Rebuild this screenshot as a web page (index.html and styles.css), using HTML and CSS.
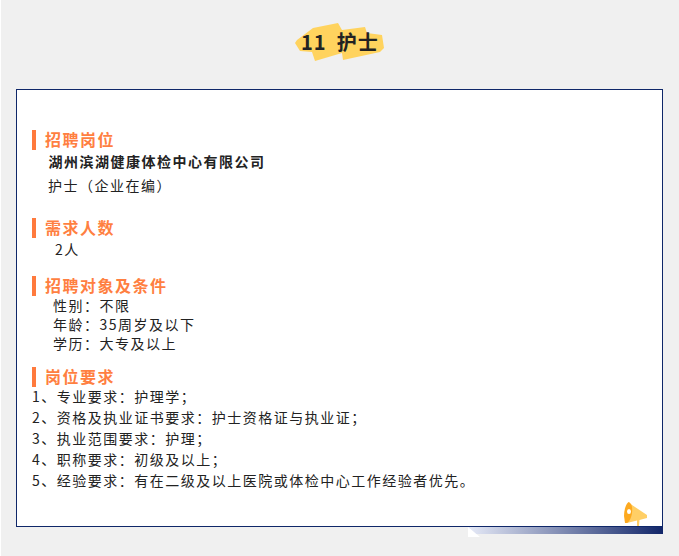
FILE: index.html
```html
<!DOCTYPE html>
<html lang="zh-CN">
<head>
<meta charset="utf-8">
<title>护士</title>
<link rel="stylesheet" href="styles.css">
</head>
<body>
<div class="page">
  <header class="title-wrap">
    <div class="title">
      <svg class="brush" viewBox="0 0 90 40" aria-hidden="true">
        <path d="M0 21 L2 18 L18 6 L43 1 L47 8 L70 5 L72 11 L87 13 L89 26 L85 30 L48 38 L47 31 L20 39 L17 30 L5 29 Z" fill="#ffd35e"/>
      </svg>
      <h1 class="title-text">11 护士</h1>
    </div>
  </header>
  <main class="card">
    <section class="sec sec-first">
      <h2 class="head">招聘岗位</h2>
      <p class="line strong ind-a">湖州滨湖健康体检中心有限公司</p>
      <p class="line tall ind-b">护士（企业在编）</p>
    </section>
    <section class="sec sec-need">
      <h2 class="head">需求人数</h2>
      <p class="line count ind-c">2人</p>
    </section>
    <section class="sec sec-cond">
      <h2 class="head">招聘对象及条件</h2>
      <p class="line ind-d">性别：不限</p>
      <p class="line ind-d">年龄：35周岁及以下</p>
      <p class="line ind-d">学历：大专及以上</p>
    </section>
    <section class="sec sec-req">
      <h2 class="head">岗位要求</h2>
      <div class="list">
        <p class="line">1、专业要求：护理学；</p>
        <p class="line">2、资格及执业证书要求：护士资格证与执业证；</p>
        <p class="line">3、执业范围要求：护理；</p>
        <p class="line">4、职称要求：初级及以上；</p>
        <p class="line">5、经验要求：有在二级及以上医院或体检中心工作经验者优先。</p>
      </div>
    </section>
    <svg class="horn" viewBox="0 0 24 24" aria-hidden="true">
      <path d="M5 1 L23 13 L23 16 L15.500 18 L15 24 L13 24 L13 18.500 L3 21 Z" fill="#ffcf66"/>
      <path d="M5 0 C2 1 0 8 0 14 L1 21 L3 21 C7 19 10 8 7 2 Z" fill="#fda91f"/>
      <ellipse cx="5" cy="9.500" rx="2" ry="2.500" fill="#fff"/>
    </svg>
  </main>
  <div class="footer-bar"></div>
</div>
</body>
</html>
```
FILE: styles.css
```css
* { box-sizing: border-box; }
html, body { margin: 0; padding: 0; }
body {
  background: #f0f0f0;
  font-family: "Noto Sans CJK SC", "Liberation Sans", sans-serif;
  color: #222;
}
.page {
  width: 679px;
  height: 556px;
  padding: 0 16px 0 15px;
  border-left: 1px solid #fff;
  overflow: hidden;
}
.title-wrap {
  display: flex;
  justify-content: center;
  height: 89px;
  padding-top: 22px;
  padding-left: 1px;
}
.title {
  position: relative;
  width: 90px;
  height: 40px;
}
.brush {
  position: absolute;
  left: 0;
  top: 0;
  width: 90px;
  height: 40px;
}
.title-text {
  position: relative;
  margin: 0;
  padding-left: 6px;
  font-size: 20px;
  line-height: 40px;
  font-weight: 700;
  letter-spacing: 1px;
  word-spacing: 4.5px;
  white-space: nowrap;
  color: #222;
}
.card {
  position: relative;
  width: 647px;
  height: 438px;
  background: #fff;
  border: 1px solid #0f2769;
  padding: 0 15px;
}
.sec-first { padding-top: 40px; }
.sec-need { padding-top: 20px; }
.sec-cond { padding-top: 16px; }
.sec-req { padding-top: 14px; }
.head {
  margin: 0;
  height: 20px;
  padding-left: 9px;
  border-left: 4px solid #ff7a3d;
  font-size: 16px;
  line-height: 19px;
  font-weight: 700;
  letter-spacing: 1.5px;
  white-space: nowrap;
  color: #ff7f41;
}
.line {
  margin: 0;
  font-size: 14px;
  line-height: 21.2px;
  letter-spacing: 1.5px;
  white-space: nowrap;
}
.list { margin-top: -1.4px; }
.strong { font-weight: 700; line-height: 22px; }
.tall { line-height: 26px; }
.count { line-height: 22px; }
.ind-a { padding-left: 16.5px; }
.ind-b { padding-left: 16px; }
.ind-c { padding-left: 23px; }
.ind-d { padding-left: 21px; line-height: 19px; }
.horn {
  position: absolute;
  right: 14px;
  bottom: 0;
  width: 24px;
  height: 24px;
}
.footer-bar {
  position: relative;
  width: 195px;
  height: 7px;
  margin-left: 452px;
  background: linear-gradient(90deg, #e6eaf7 0%, #122669 100%);
}
.footer-bar::after {
  content: "";
  position: absolute;
  left: 0;
  top: 0;
  width: 12px;
  height: 10px;
  background: #fff;
  clip-path: polygon(0 0, 100% 100%, 0 100%);
}
```
